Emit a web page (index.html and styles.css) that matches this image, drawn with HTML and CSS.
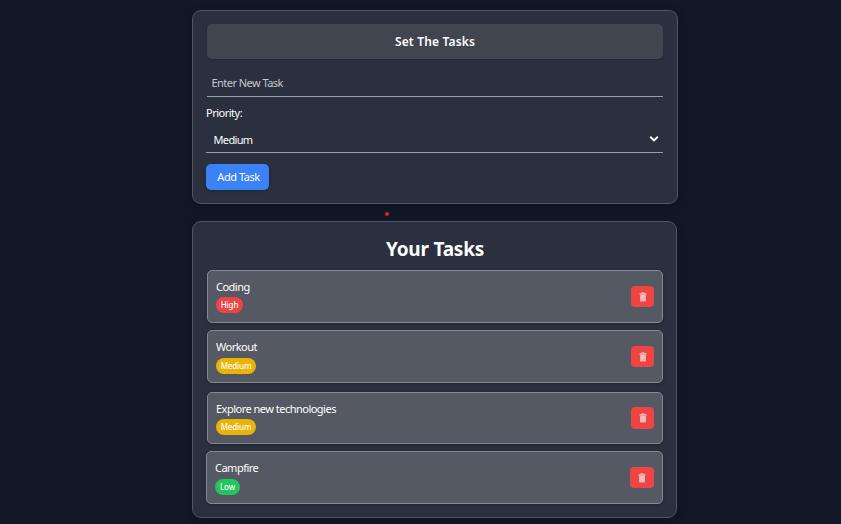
FILE: index.html
```html
<!DOCTYPE html>
<html lang="en">
<head>
<meta charset="utf-8">
<title>Tasks</title>
<link rel="stylesheet" href="styles.css">
</head>
<body>
<svg class="sprite" width="0" height="0">
  <symbol id="trash" viewBox="0 0 8 10">
    <path d="M.6 1.200h6.800v1.400H.6z" fill="#f9bcbc"/>
    <path d="M2.400.3h3.200v1H2.400z" fill="#f8b4b4"/>
    <path d="M1 2.400h6v6.400q0 .7-.8.7H1.800q-.8 0-.8-.7z" fill="#f8abab"/>
    <path d="M3 3v5.800M5 3v5.800" stroke="#fbcaca" stroke-width=".9"/>
  </symbol>
</svg>
<main>
  <form class="card form-card">
    <h1 class="form-title"><span>Set The Tasks</span></h1>
    <div class="field input"><span class="placeholder">Enter New Task</span></div>
    <label class="label"><span class="priority">Priority:</span></label>
    <div class="field select">
      <span class="value">Medium</span>
      <svg class="chevron" width="10" height="8" viewBox="0 0 10 8"><path d="M1.200 1.700 5 5.400 8.800 1.700" fill="none" stroke="#fff" stroke-width="2"/></svg>
    </div>
    <button class="add" type="button"><span>Add Task</span></button>
  </form>
  <i class="dot"></i>
  <section class="card list-card">
    <h2 class="list-title"><span>Your Tasks</span></h2>
    <article class="task">
      <div class="info"><p class="name coding">Coding</p><span class="badge high">High</span></div>
      <button class="delete" type="button" aria-label="Delete"><svg width="8" height="10"><use href="#trash"/></svg></button>
    </article>
    <article class="task workout">
      <div class="info"><p class="name">Workout</p><span class="badge medium">Medium</span></div>
      <button class="delete" type="button" aria-label="Delete"><svg width="8" height="10"><use href="#trash"/></svg></button>
    </article>
    <article class="task explore">
      <div class="info"><p class="name">Explore new technologies</p><span class="badge medium">Medium</span></div>
      <button class="delete" type="button" aria-label="Delete"><svg width="8" height="10"><use href="#trash"/></svg></button>
    </article>
    <article class="task campfire">
      <div class="info"><p class="name">Campfire</p><span class="badge low">Low</span></div>
      <button class="delete" type="button" aria-label="Delete"><svg width="8" height="10"><use href="#trash"/></svg></button>
    </article>
  </section>
</main>
</body>
</html>
```
FILE: styles.css
```css
* { box-sizing: border-box; margin: 0; }
body {
  height: 524px;
  overflow: hidden;
  background: #111827;
  color: #fff;
  font: 11px/16px "Noto Sans", "Open Sans", sans-serif;
}
.sprite { display: block; }
main { position: relative; width: 486px; margin-left: 192px; padding-top: 10px; }
.card {
  background: #2a303d;
  border: 1px solid #505660;
  border-radius: 9px;
  box-shadow: 0 3px 10px rgba(0, 0, 0, .25);
}
.form-card { height: 194px; padding: 13px 14px; }
.form-title {
  height: 35px;
  border-radius: 5px;
  background: #40454f;
  box-shadow: 0 1px 2px rgba(0, 0, 0, .15);
  font-size: 12px;
  font-weight: 600;
  line-height: 35px;
  letter-spacing: .17px;
  text-align: center;
}
.field { border-bottom: 1px solid #9a9fa9; }
.input { height: 27px; margin-top: 11px; padding: 5px 4.5px; color: #c5c8cd; }
.placeholder { letter-spacing: -.54px; }
.label { display: block; height: 16px; margin: 8px 0 0 -1px; }
.priority { letter-spacing: -.5px; }
.select {
  display: flex;
  justify-content: space-between;
  height: 26px;
  margin: 6px 0 11px -1px;
  padding: 5px 4px 0 7.5px;
}
.value { letter-spacing: -.65px; }
.chevron { margin-top: 3px; }
button { border: 0; padding: 0; color: #fff; font: inherit; }
.add {
  display: block;
  width: 63px;
  height: 26px;
  margin-left: -1px;
  padding-left: 2px;
  border-radius: 5px;
  background: #3b82f6;
  box-shadow: 0 1px 3px rgba(0, 0, 0, .25);
  letter-spacing: -.45px;
}
.dot {
  position: absolute;
  left: 193px;
  top: 212px;
  width: 4px;
  height: 4px;
  border-radius: 50%;
  background: #e3202b;
}
.list-card { width: 485px; height: 297px; margin-top: 17px; padding: 13px 13px 13px 14px; }
.list-title {
  height: 28px;
  margin-bottom: 7px;
  font-size: 19px;
  line-height: 28px;
  letter-spacing: -.22px;
  text-align: center;
}
.task {
  display: flex;
  align-items: center;
  justify-content: space-between;
  height: 53px;
  padding: 0 8px;
  border: 1px solid #858890;
  border-radius: 5px;
  background: #555963;
  box-shadow: 0 1px 3px rgba(0, 0, 0, .25);
}
.workout { margin-top: 7px; }
.explore { height: 52px; margin-top: 9px; }
.campfire { margin: 7px 0 0 -1px; }
.info { height: 35px; }
.name { height: 17px; line-height: 16px; letter-spacing: -.51px; }
.badge {
  display: block;
  width: 40px;
  height: 16px;
  margin-top: 1px;
  border-radius: 8px;
  font-size: 8px;
  font-weight: 500;
  line-height: 16px;
  letter-spacing: -.15px;
  text-align: center;
}
.workout .badge, .campfire .badge { margin-top: 2px; }
.explore .badge { margin-top: 1.5px; }
.high { width: 27px; background: #ef4444; }
.medium { background: #eab308; }
.low { width: 25px; background: #22c55e; }
.delete {
  display: flex;
  align-items: center;
  justify-content: center;
  width: 23px;
  height: 21px;
  border-radius: 4px;
  background: #ef4444;
}
.explore .delete { height: 22px; }
.campfire .delete { width: 24px; }
```
